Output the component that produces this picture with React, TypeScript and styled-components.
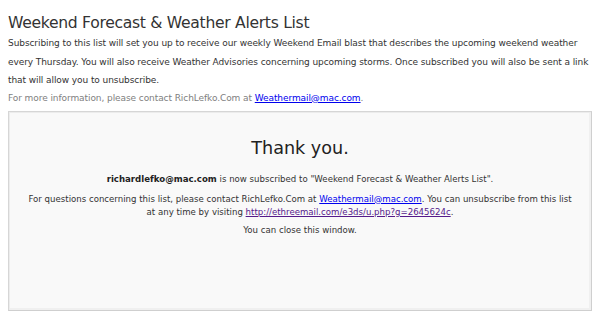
import styled, { createGlobalStyle } from 'styled-components'

const GlobalStyle = createGlobalStyle`
  html, body {
    margin: 0;
    padding: 0;
    background: #ffffff;
  }
  body {
    font-family: 'DejaVu Sans', Verdana, sans-serif;
    color: #333333;
  }
`

const Page = styled.div`
  width: 600px;
  height: 331px;
  padding: 13px 8px 0 8px;
  box-sizing: border-box;
`

const Title = styled.h1`
  margin: 0;
  font-size: 15.6px;
  letter-spacing: -0.3px;
  font-weight: normal;
  line-height: 20px;
  color: #333333;
`

const Intro = styled.p`
  margin: 1px 0 0 0;
  font-size: 9px;
  letter-spacing: -0.08px;
  line-height: 18.5px;
`

const MoreInfo = styled.p`
  margin: 0;
  font-size: 9px;
  letter-spacing: -0.08px;
  line-height: 17px;
  color: #808080;
`

const Link = styled.a<{ $visited?: boolean }>`
  color: ${(p) => (p.$visited ? '#551a8b' : '#0000ee')};
  text-decoration: underline;
`

const Frame = styled.div`
  margin-top: 4px;
  height: 200px;
  box-sizing: border-box;
  background: #f9f9f9;
  border: 1px solid #d6d6d6;
  border-right-color: #cfcfcf;
  border-bottom-color: #cfcfcf;
  box-shadow: inset 1px 1px 0 #ececec, inset -2px -2px 0 #f0f0f0;
  display: flex;
  flex-direction: column;
  align-items: center;
  padding-top: 24px;
  text-align: center;
`

const ThankYou = styled.h2`
  margin: 0;
  font-size: 17.6px;
  font-weight: normal;
  line-height: 24px;
  color: #222222;
`

const Message = styled.p<{ $gap?: number }>`
  margin: ${(p) => p.$gap ?? 7}px 0 0 0;
  font-size: 8.6px;
  line-height: 13px;
  color: #333333;
`

const Email = styled.strong`
  font-weight: bold;
  color: #222222;
`

export default function App() {
  return (
    <Page>
      <GlobalStyle />
      <Title>Weekend Forecast &amp; Weather Alerts List</Title>
      <Intro>
        Subscribing to this list will set you up to receive our weekly Weekend Email blast that describes the
        upcoming weekend weather every Thursday. You will also receive Weather Advisories concerning upcoming
        storms. Once subscribed you will also be sent a link that will allow you to unsubscribe.
      </Intro>
      <MoreInfo>
        For more information, please contact RichLefko.Com at <Link href="#">Weathermail@mac.com</Link>.
      </MoreInfo>
      <Frame>
        <ThankYou>Thank you.</ThankYou>
        <Message $gap={13}>
          <Email>richardlefko@mac.com</Email> is now subscribed to "Weekend Forecast &amp; Weather Alerts List".
        </Message>
        <Message>
          For questions concerning this list, please contact RichLefko.Com at{' '}
          <Link href="#">Weathermail@mac.com</Link>. You can unsubscribe from this list
          <br />
          at any time by visiting <Link href="#" $visited>http://ethreemail.com/e3ds/u.php?g=2645624c</Link>.
        </Message>
        <Message $gap={5}>You can close this window.</Message>
      </Frame>
    </Page>
  )
}
